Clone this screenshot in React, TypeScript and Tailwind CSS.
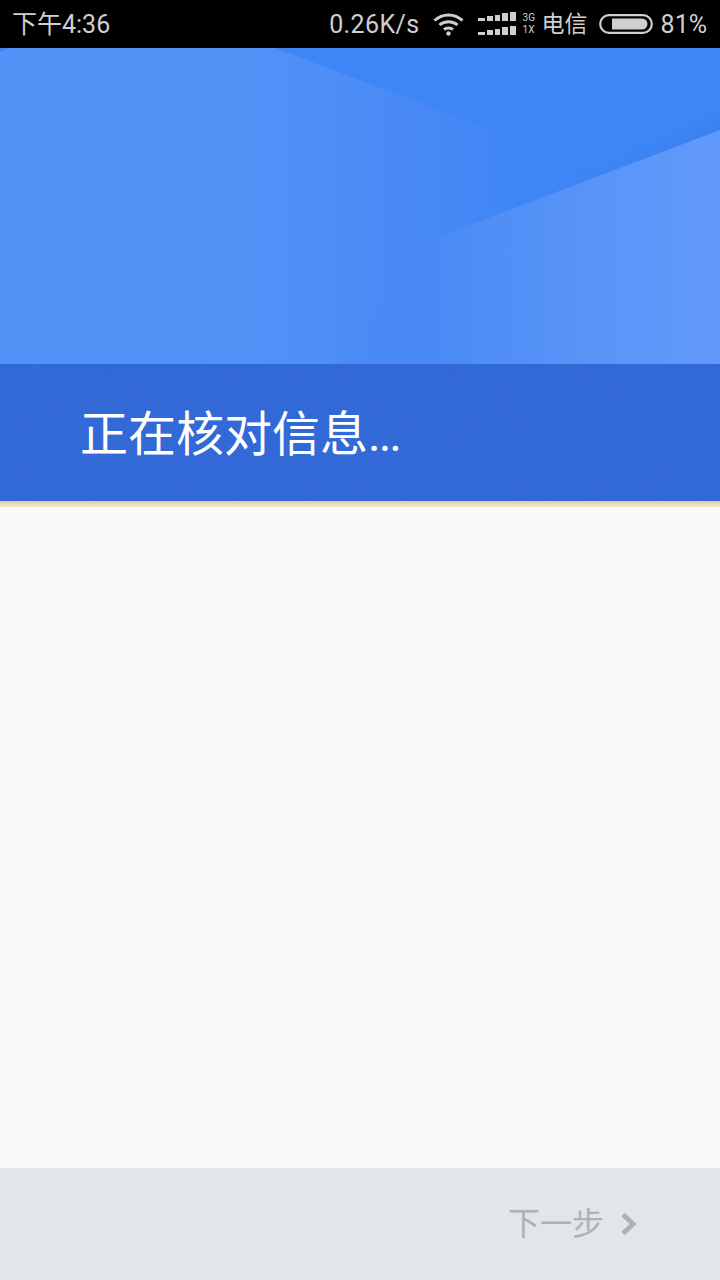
import React from "react";

const Hero = () => (
  <svg className="block h-full w-full" viewBox="0 0 720 316" preserveAspectRatio="none">
    <defs>
      <linearGradient id="base" gradientUnits="userSpaceOnUse" x1="0" y1="0" x2="720" y2="0">
        <stop offset="0" stopColor="#5291f6" />
        <stop offset="0.36" stopColor="#5291f6" />
        <stop offset="0.58" stopColor="#4889f5" />
        <stop offset="0.72" stopColor="#3f86f5" />
        <stop offset="1" stopColor="#3c84f5" />
      </linearGradient>
      <linearGradient id="light" gradientUnits="userSpaceOnUse" x1="340" y1="0" x2="700" y2="0">
        <stop offset="0" stopColor="#4889f4" stopOpacity="0" />
        <stop offset="0.22" stopColor="#4889f4" />
        <stop offset="0.62" stopColor="#5793f7" />
        <stop offset="1" stopColor="#6099f9" />
      </linearGradient>
      <filter id="soft" x="-50%" y="-50%" width="200%" height="200%">
        <feGaussianBlur stdDeviation="14" />
      </filter>
    </defs>
    <rect width="720" height="316" fill="url(#base)" />
    <polygon points="275,0 720,0 720,168" fill="#3e86f6" />
    <polygon points="760,65 760,110 590,145" fill="#3579e4" filter="url(#soft)" />
    <polygon points="720,82 422,195 340,316 720,316" fill="url(#light)" />
    <polygon points="0,0 10,0 0,4" fill="#3e86f6" />
  </svg>
);

const Noise = () => (
  <svg className="absolute inset-0 h-full w-full opacity-[0.05]">
    <filter id="grain">
      <feTurbulence type="fractalNoise" baseFrequency="0.9" numOctaves="2" />
      <feColorMatrix values="0 0 0 0 1  0 0 0 0 1  0 0 0 0 1  0 0 0 1.4 -0.3" />
    </filter>
    <rect width="100%" height="100%" filter="url(#grain)" />
  </svg>
);

const Wifi = () => (
  <svg width="31" height="24" viewBox="0 0 31 24" fill="none" stroke="#cfcfcf" strokeWidth="3">
    <path d="M1.5 8.5C9.5 1 21.5 1 29.5 8.5" />
    <path d="M6.5 13C11.5 8.5 19.5 8.5 24.5 13" />
    <path d="M11 17.5C13.5 15.5 17.5 15.5 20 17.5" />
    <circle cx="15.5" cy="21.5" r="2.2" fill="#cfcfcf" stroke="none" />
  </svg>
);

const Signal = () => (
  <svg width="38" height="24" viewBox="0 0 38 24" fill="#cfcfcf">
    <rect x="0" y="6" width="7" height="3" />
    <rect x="9" y="4" width="6" height="5" />
    <rect x="17" y="3" width="5" height="6" />
    <rect x="24" y="1" width="6" height="8" />
    <rect x="32" y="0" width="6" height="9" />
    <rect x="0" y="20" width="7" height="3" />
    <rect x="9" y="18" width="6" height="5" />
    <rect x="17" y="17" width="5" height="6" />
    <rect x="24" y="15" width="6" height="8" />
    <rect x="32" y="14" width="6" height="9" />
  </svg>
);

const Battery = () => (
  <svg width="54" height="20" viewBox="0 0 54 20">
    <rect x="1.2" y="1.2" width="51.6" height="17.6" rx="8.8" fill="none" stroke="#cfcfcf" strokeWidth="2.2" />
    <path d="M13 4.5H43a5.5 5.5 0 0 1 0 11H13Z" fill="#cfcfcf" />
  </svg>
);

export default function App() {
  const cjk = "font-['Roboto','Noto_Sans_CJK_SC',sans-serif]";
  return (
    <div className={`flex h-[1280px] w-[720px] flex-col overflow-hidden bg-[#fafafa] ${cjk}`}>
      <div className="flex h-12 shrink-0 items-center justify-between bg-black pl-3 pr-[13px] text-[25px] leading-none text-[#cfcfcf]">
        <span>下午4:36</span>
        <div className="flex items-center">
          <span className="mr-[13px] tracking-[0.4px]">0.26K/s</span>
          <Wifi />
          <div className="ml-[14px]"><Signal /></div>
          <div className="ml-[7px] flex w-[14px] flex-col text-[10px] leading-[12px]">
            <span>3G</span>
            <span>1X</span>
          </div>
          <span className="ml-[5px] text-[23px]">电信</span>
          <div className="ml-[11px]"><Battery /></div>
          <span className="ml-2">81%</span>
        </div>
      </div>
      <div className="h-[316px] shrink-0">
        <Hero />
      </div>
      <div className="relative flex h-[137px] shrink-0 items-center bg-[#2e66d6] pl-[80px] pt-[4px] text-[48px] font-normal text-white">
        <Noise />
        <span className="relative">
          正在核对信息<span className="tracking-[-2px]">...</span>
        </span>
      </div>
      <div className="h-[6px] shrink-0 bg-gradient-to-b from-[#e0cc9c] to-[#f3e8cf]" />
      <div className="flex-1" />
      <div className="flex h-[112px] shrink-0 items-center justify-end bg-[#e2e6e9] pr-[82px] text-[32px] text-[#aeb2b6]">
        <span>下一步</span>
        <svg className="ml-[16px]" width="18" height="24" viewBox="0 0 18 24" fill="none" stroke="#aeb2b6" strokeWidth="5">
          <path d="M3 2.5L13 12L3 21.5" />
        </svg>
      </div>
    </div>
  );
}
